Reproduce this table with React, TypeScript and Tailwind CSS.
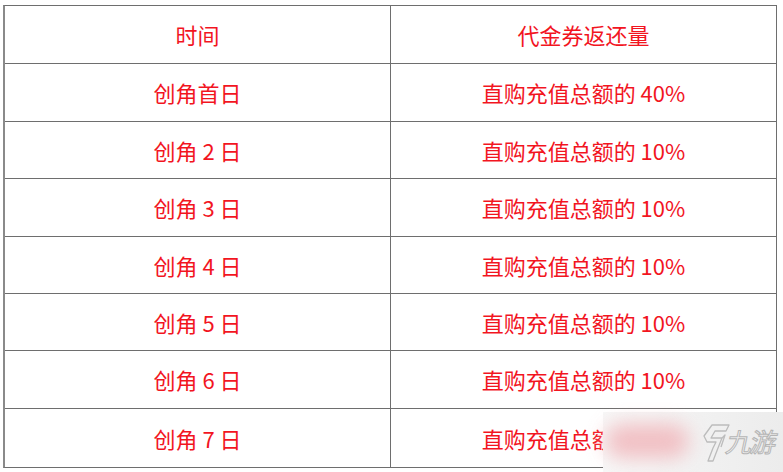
import React from "react"

const rows = [
  { day: "创角首日", rate: "直购充值总额的 40%", h: "h-[58px]" },
  { day: "创角 2 日", rate: "直购充值总额的 10%", h: "h-[57px]" },
  { day: "创角 3 日", rate: "直购充值总额的 10%", h: "h-[58px]" },
  { day: "创角 4 日", rate: "直购充值总额的 10%", h: "h-[57px]" },
  { day: "创角 5 日", rate: "直购充值总额的 10%", h: "h-[57px]" },
  { day: "创角 6 日", rate: "直购充值总额的 10%", h: "h-[58px]" },
  { day: "创角 7 日", rate: "直购充值总额的 10%", h: "h-[58px]" },
]

function Cell({ children, left }: { children: React.ReactNode; left?: boolean }) {
  return (
    <div className={`flex items-center justify-center ${left ? "border-r border-[#6e6e6e]" : ""}`}>
      {children}
    </div>
  )
}

export default function App() {
  return (
    <div
      className="relative w-[783px] h-[472px] bg-white overflow-hidden pt-[5px] pl-[3px] text-[22px] text-[#f2151f]"
      style={{ fontFamily: '"Noto Sans CJK SC", "Noto Sans", sans-serif' }}
    >
      <div className="w-[774px] border border-[#6e6e6e] border-l-2 border-l-[#8a8a8a]">
        <div className="grid grid-cols-[386px_1fr] h-[58px] border-b border-[#6e6e6e]">
          <Cell left>时间</Cell>
          <Cell>代金券返还量</Cell>
        </div>
        {rows.map((r, i) => (
          <div
            key={r.day}
            className={`grid grid-cols-[386px_1fr] ${r.h} ${i < rows.length - 1 ? "border-b border-[#6e6e6e]" : ""}`}
          >
            <Cell left>{r.day}</Cell>
            <Cell>{r.rate}</Cell>
          </div>
        ))}
      </div>

      {/* watermark */}
      <div className="absolute left-[603px] top-[412px] w-[180px] h-[60px] bg-gradient-to-r from-[#f7f7f7] to-[#ececec]">
        <div className="absolute left-[2px] top-[12px] w-[84px] h-[34px] rounded-full bg-[#f1b3b8] blur-[10px] opacity-80" />
        <svg className="absolute left-[98px] top-[10px]" width="30" height="42" viewBox="0 0 30 42" fill="none" stroke="#bcbcbc" strokeWidth="1.3" strokeLinejoin="round">
          <path d="M11 3 L28 3 L25 9 L14 9 L10 16 L21 16 L17 26 L12 39 L7 39 L12 26 L15 20 L6 20 L3 14 Z" />
          <path d="M21 16 L24 13 L20 25" />
        </svg>
        <span
          className="absolute left-[124px] top-[16px] whitespace-nowrap text-[26px] leading-none text-transparent [-webkit-text-stroke:1px_#b5b5b5] tracking-[-2px] [transform:skewX(-12deg)]"
          style={{ fontFamily: '"Noto Sans CJK SC", sans-serif' }}
        >
          九游
        </span>
      </div>
    </div>
  )
}
